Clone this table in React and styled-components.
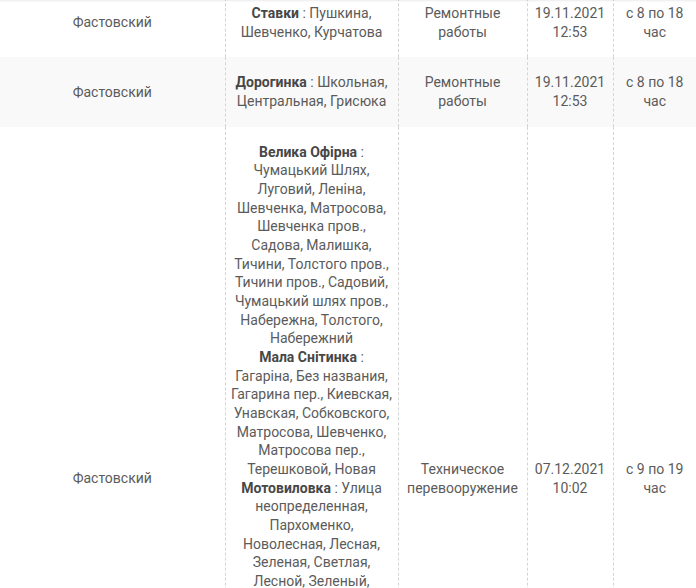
import styled, { createGlobalStyle } from "styled-components"

const rows = [
    {
        district: "Фастовский",
        places: [{ name: "Ставки", streets: "Пушкина, Шевченко, Курчатова" }],
        reason: "Ремонтные работы",
        date: "19.11.2021",
        time: "12:53",
        hours: "с 8 по 18 час",
    },
    {
        district: "Фастовский",
        places: [{ name: "Дорогинка", streets: "Школьная, Центральная, Грисюка" }],
        reason: "Ремонтные работы",
        date: "19.11.2021",
        time: "12:53",
        hours: "с 8 по 18 час",
    },
    {
        district: "Фастовский",
        places: [
            {
                name: "Велика Офірна",
                streets: "Чумацький Шлях, Луговий, Леніна, Шевченка, Матросова, Шевченка пров., Садова, Малишка, Тичини, Толстого пров., Тичини пров., Садовий, Чумацький шлях пров., Набережна, Толстого, Набережний",
            },
            {
                name: "Мала Снітинка",
                streets: "Гагаріна, Без названия, Гагарина пер., Киевская, Унавская, Собковского, Матросова, Шевченко, Матросова пер., Терешковой, Новая",
            },
            {
                name: "Мотовиловка",
                streets: "Улица неопределенная, Пархоменко, Новолесная, Лесная, Зеленая, Светлая, Лесной, Зеленый, Садовая, Молодежная, Полевая, Мира, Гагарина, Набережная, Школьная, Вишневая, Озерная, Октябрьская, Победы, Садовый пер., Центральная, Лесная пер., Заречная, Луговая, Весенняя, Солнечная, Шевченко пер., Полевой пер., Калиновая, Мичурина, Киевская",
            },
        ],
        reason: "Техническое перевооружение",
        date: "07.12.2021",
        time: "10:02",
        hours: "с 9 по 19 час",
    },
]

const widths = [225, 173, 129, 86, 83]

export default function App() {
    return (
        <>
            <GlobalStyle />
            <Frame>
                <Table>
                    <colgroup>
                        {widths.map((w, i) => <Col key={i} w={w} />)}
                    </colgroup>
                    <tbody>
                        {rows.map((row, i) => (
                            <Row key={i} striped={i % 2 === 1}>
                                <Cell>{row.district}</Cell>
                                <Cell>
                                    {row.places.map(p => (
                                        <Place key={p.name}>
                                            <b>{p.name}</b> : {p.streets}
                                        </Place>
                                    ))}
                                </Cell>
                                <Cell>{row.reason}</Cell>
                                <Cell>{row.date}<br />{row.time}</Cell>
                                <Cell>{row.hours}</Cell>
                            </Row>
                        ))}
                    </tbody>
                </Table>
            </Frame>
        </>
    )
}

const GlobalStyle = createGlobalStyle`
    body {
        margin: 0;
        background: #fff;
        font-family: Roboto, "Liberation Sans", sans-serif;
    }
`

const Frame = styled.div`
    height: 100vh;
    overflow: hidden;
    box-shadow: inset 0 2px 2px -1px rgba(0, 0, 0, 0.08);
`

const Table = styled.table`
    width: 696px;
    margin-top: -12px;
    border-collapse: collapse;
    table-layout: fixed;
    position: relative;
    z-index: -1;
`

const Col = styled.col`
    width: ${p => p.w}px;
`

const Row = styled.tr`
    background-color: ${p => (p.striped ? "#f9f9f9" : "#fff")};
`

const Cell = styled.td`
    padding: 16px 5px;
    text-align: center;
    vertical-align: middle;
    font-size: 14px;
    line-height: 18.67px;
    color: #5b5b5b;
    border-left: 1px dashed #d4d4d4;

    &:first-child {
        border-left: none;
    }
`

const Place = styled.div`
    b {
        font-weight: 700;
        color: #474747;
    }
`
